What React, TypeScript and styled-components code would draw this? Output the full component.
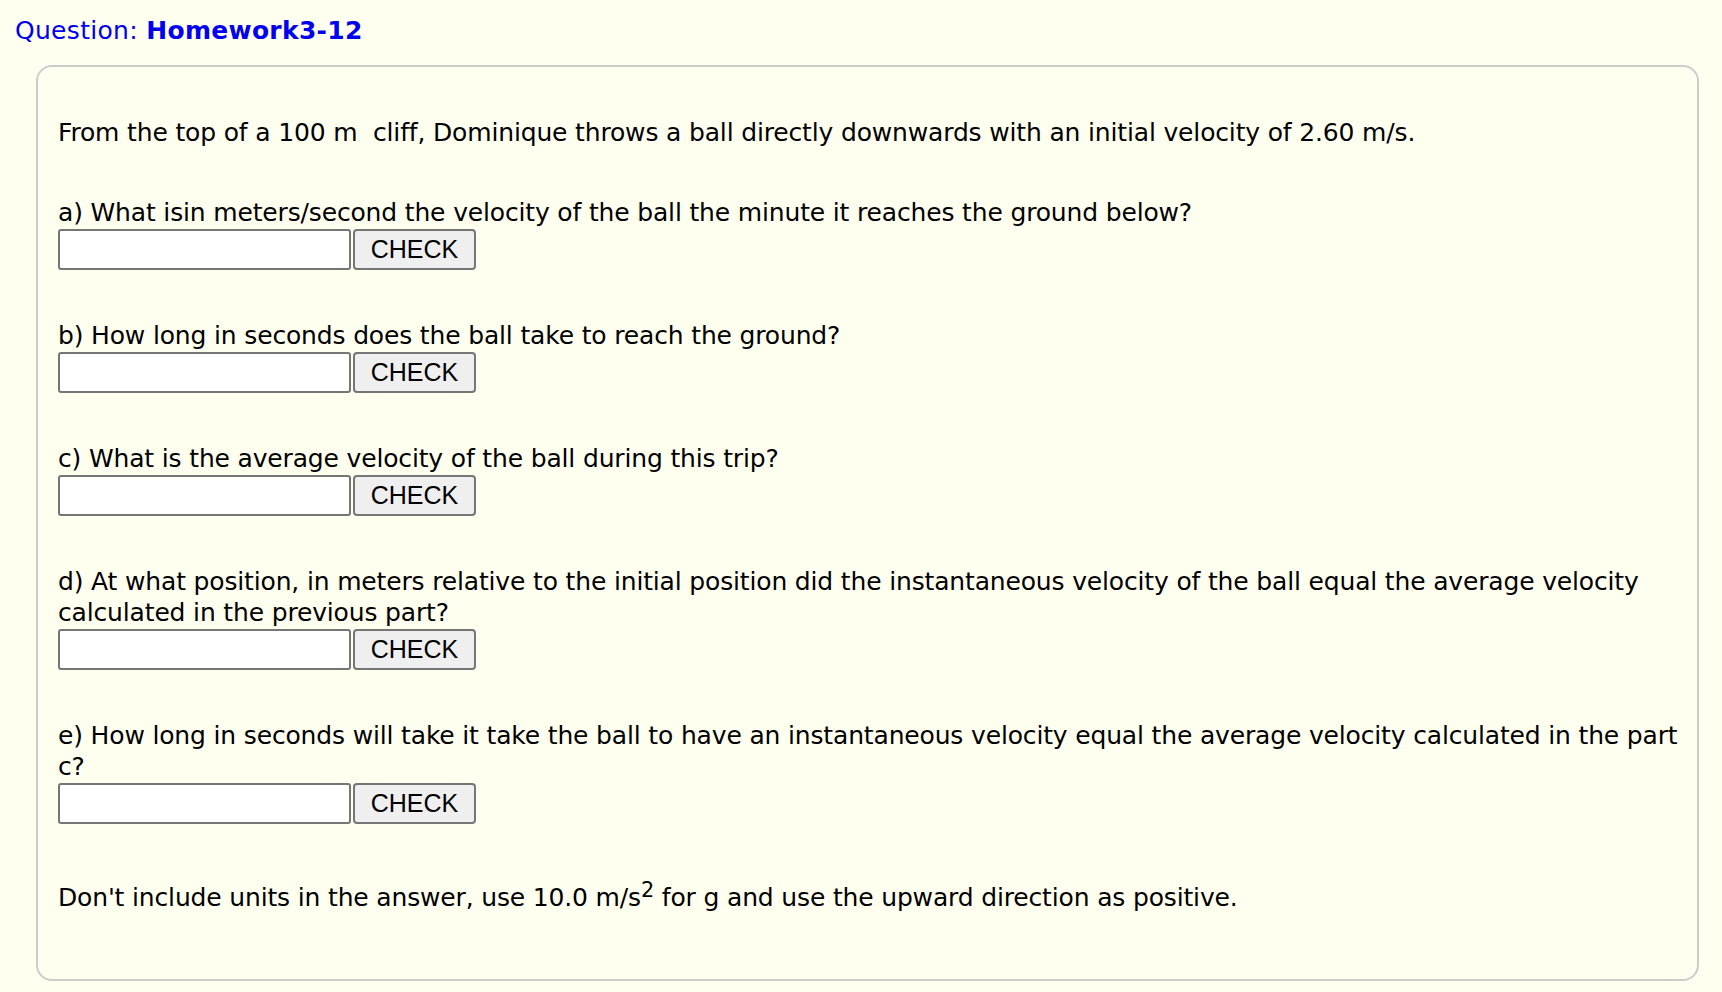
import styled, { createGlobalStyle } from "styled-components";

const GlobalStyle = createGlobalStyle`
  html, body {
    margin: 0;
    padding: 0;
    background: #fffff0;
  }
  body {
    font-family: "DejaVu Sans", Verdana, sans-serif;
    color: #000;
  }
`;

const Page = styled.div`
  padding: 15px 23px 10px 36px;
`;

const Title = styled.h1`
  margin: 0 0 19px -21px;
  font-size: 25px;
  line-height: 31px;
  font-weight: 400;
  letter-spacing: 0.3px;
  color: #0000ee;
`;

const Name = styled.span`
  font-weight: 700;
`;

const Card = styled.div`
  border: 2px solid #cccccc;
  border-radius: 16px;
  padding: 50px 4px 66px 20px;
  font-size: 25px;
  line-height: 31px;
  letter-spacing: -0.16px;
`;

const Intro = styled.p`
  margin: 0 0 49px 0;
`;

const Part = styled.div`
  display: flex;
  flex-direction: column;
  margin-bottom: 50px;
`;

const Prompt = styled.div`
  margin-bottom: 1px;
`;

const AnswerRow = styled.div`
  display: flex;
  gap: 2px;
`;

const Answer = styled.input`
  box-sizing: border-box;
  width: 293px;
  height: 41px;
  border: 2px solid #767676;
  border-radius: 3px;
  background: #ffffff;
  font-size: 22px;
`;

const CheckButton = styled.button`
  box-sizing: border-box;
  width: 123px;
  height: 41px;
  border: 2px solid #767676;
  border-radius: 4px;
  background: #efefef;
  font-family: "Liberation Sans", Arial, sans-serif;
  font-size: 25px;
  letter-spacing: 0;
  color: #000;
  padding: 0;
`;

const Note = styled.p`
  margin: 51px 0 0 0;
`;

const parts = [
  "a) What isin meters/second the velocity of the ball the minute it reaches the ground below?",
  "b) How long in seconds does the ball take to reach the ground?",
  "c) What is the average velocity of the ball during this trip?",
  "d) At what position, in meters relative to the initial position did the instantaneous velocity of the ball equal the average velocity calculated in the previous part?",
  "e) How long in seconds will take it take the ball to have an instantaneous velocity equal the average velocity calculated in the part c?",
];

export default function App() {
  return (
    <Page>
      <GlobalStyle />
      <Title>
        Question: <Name>Homework3-12</Name>
      </Title>
      <Card>
        <Intro>
          From the top of a 100 m&nbsp; cliff, Dominique throws a ball directly
          downwards with an initial velocity of 2.60 m/s.
        </Intro>
        {parts.map((text) => (
          <Part key={text}>
            <Prompt>{text}</Prompt>
            <AnswerRow>
              <Answer type="text" />
              <CheckButton>CHECK</CheckButton>
            </AnswerRow>
          </Part>
        ))}
        <Note>
          Don't include units in the answer, use 10.0 m/s<sup>2</sup> for g and
          use the upward direction as positive.
        </Note>
      </Card>
    </Page>
  );
}
